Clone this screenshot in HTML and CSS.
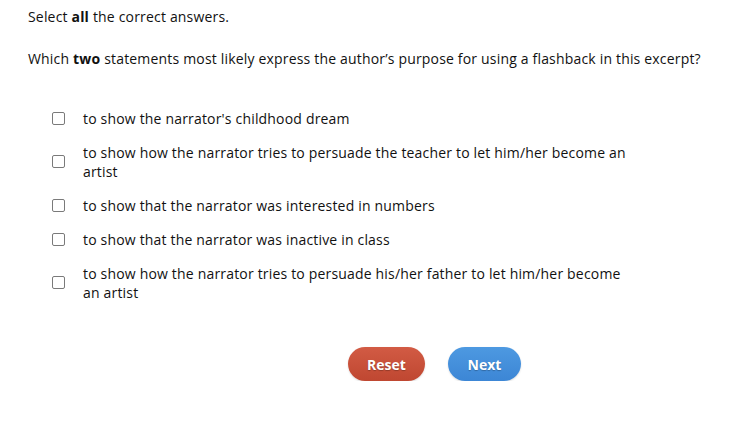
FILE: index.html
```html
<!DOCTYPE html>
<html>
<head>
<meta charset="utf-8">
<link rel="stylesheet" href="styles.css">
</head>
<body>
<div class="page">
  <p class="instr">Select <b>all</b> the correct answers.</p>
  <p class="question">Which <b>two</b> statements most likely express the author’s purpose for using a flashback in this excerpt?</p>
  <ul class="options">
    <li class="option"><span class="box"></span><span class="label">to show the narrator's childhood dream</span></li>
    <li class="option"><span class="box"></span><span class="label">to show how the narrator tries to persuade the teacher to let him/her become an artist</span></li>
    <li class="option"><span class="box"></span><span class="label">to show that the narrator was interested in numbers</span></li>
    <li class="option"><span class="box"></span><span class="label">to show that the narrator was inactive in class</span></li>
    <li class="option"><span class="box"></span><span class="label">to show how the narrator tries to persuade his/her father to let him/her become an artist</span></li>
  </ul>
  <div class="actions">
    <button class="btn reset">Reset</button>
    <button class="btn next">Next</button>
  </div>
</div>
</body>
</html>
```
FILE: styles.css
```css
html, body {
  margin: 0;
  padding: 0;
  background: #ffffff;
}
.page {
  font-family: "Open Sans", "DejaVu Sans", sans-serif;
  font-size: 14px;
  line-height: 19px;
  letter-spacing: 0.18px;
  color: #111111;
  padding: 7px 0 0 28px;
}
.instr {
  margin: 0;
}
.question {
  margin: 23px 0 0 0;
}
b {
  font-weight: 700;
}
.options {
  list-style: none;
  margin: 33px 0 0 0;
  padding: 0 0 0 24px;
}
.option {
  display: flex;
  align-items: center;
  padding: 7.5px 0;
}
.box {
  flex: none;
  width: 11px;
  height: 11px;
  border: 1px solid #7a7a7a;
  border-radius: 2px;
  background: #fff;
}
.label {
  margin-left: 18px;
  width: 551px;
}
.actions {
  display: flex;
  gap: 23px;
  margin-top: 38px;
  padding-left: 320px;
}
.btn {
  font-family: "Open Sans", "DejaVu Sans", sans-serif;
  font-size: 14px;
  font-weight: 700;
  color: #ffffff;
  height: 34px;
  border-radius: 17px;
  border: none;
  padding: 0;
  text-shadow: 0 1px 1px rgba(0, 0, 0, 0.25);
  box-shadow: 0 1px 2px rgba(0, 0, 0, 0.15);
}
.reset {
  width: 77px;
  background: linear-gradient(#d25b44, #bf4731);
}
.next {
  width: 73px;
  background: linear-gradient(#4d99e1, #3c86d5);
}
```
